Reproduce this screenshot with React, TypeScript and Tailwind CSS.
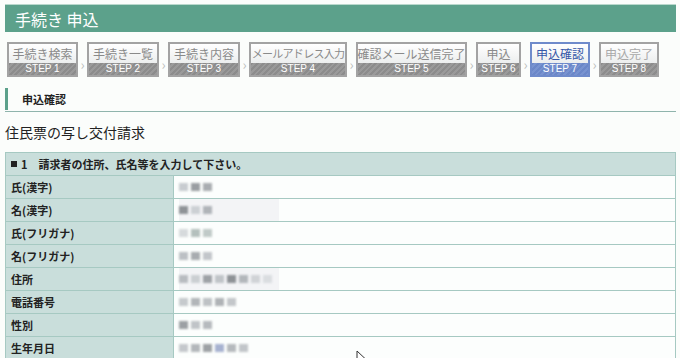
import React from "react";

const font = { fontFamily: '"Noto Sans CJK JP", "Noto Sans", sans-serif' };

const steps = [
  { label: "手続き検索", w: "w-[71px]" },
  { label: "手続き一覧", w: "w-[72px]" },
  { label: "手続き内容", w: "w-[72px]" },
  { label: "メールアドレス入力", w: "w-[98px]", tight: true },
  { label: "確認メール送信完了", w: "w-[111px]" },
  { label: "申込", w: "w-[45px]" },
  { label: "申込確認", w: "w-[60px]", active: true },
  { label: "申込完了", w: "w-[60px]", muted: true },
];

// blurred personal data
const rows = [
  { label: "氏(漢字)", blobs: ["#c8ccd0", "#9a9ea2", "#a9adb1"] },
  { label: "名(漢字)", blobs: ["#8f9397", "#ccd0d4", "#b0b4b8"], shade: true },
  { label: "氏(フリガナ)", blobs: ["#d6dadc", "#b4c0bd", "#c0cac8"] },
  { label: "名(フリガナ)", blobs: ["#bcc0c4", "#a8acb0", "#c2c6ca"] },
  { label: "住所", blobs: ["#b8bcc0", "#cbcfd2", "#9ea2a6", "#c0c4c8", "#8e9296", "#b3b7bb", "#d0d3d6", "#dadde0"], shade: true },
  { label: "電話番号", blobs: ["#c6cacd", "#b2b6b9", "#bec2c5", "#afb3b6", "#c3c7ca"] },
  { label: "性別", blobs: ["#9ca0a4", "#c0c4c8", "#b6babe"] },
  { label: "生年月日", blobs: ["#c4c8cc", "#b3b7bb", "#9da1a5", "#a7b2d0", "#b5b9bd", "#c1c5c9"] },
];

function Step({ label, w, active, tight, muted, n }: { label: string; w: string; active?: boolean; tight?: boolean; muted?: boolean; n: number }) {
  return (
    <div
      className={`${w} h-[35px] flex flex-col border-2 ${
        active ? "border-[#6f8bcb]" : "border-[#a3a3a3]"
      }`}
    >
      <div
        className={`h-[19px] flex items-center justify-center whitespace-nowrap leading-none bg-gradient-to-b from-white to-[#eceeee] ${
          tight ? "text-[11px] tracking-[-0.7px]" : "text-[12px]"
        } ${active ? "text-[#3557a8]" : muted ? "text-[#a8a8a8]" : "text-[#8a8a8a]"}`}
      >
        {label}
      </div>
      <div
        className={`flex-1 flex items-center justify-center text-[10px] leading-none text-white ${
          active
            ? "bg-[repeating-linear-gradient(135deg,#6b87c8_0px,#6b87c8_2px,#7893d0_2px,#7893d0_4px)]"
            : "bg-[repeating-linear-gradient(135deg,#8c8c8c_0px,#8c8c8c_2px,#9a9a9a_2px,#9a9a9a_4px)]"
        }`}
        style={{ fontFamily: '"Liberation Sans", sans-serif' }}
      >
        STEP {n}
      </div>
    </div>
  );
}

function Blur({ colors }: { colors: string[] }) {
  return (
    <div className="flex items-center blur-[1.2px]">
      {colors.map((c, i) => (
        <span
          key={i}
          className="inline-block w-[9px] h-[8px] mr-[3px]"
          style={{ backgroundColor: c }}
        />
      ))}
    </div>
  );
}

export default function App() {
  return (
    <div
      className="relative w-[680px] h-[358px] overflow-hidden bg-[#fbfdfb] pl-[5px] pr-[4px] pt-[4px]"
      style={font}
    >
      <div className="h-[28px] bg-[#5ca18b] border-t border-[#b9d8cc] flex items-center pl-[10px] text-white text-[16px]">
        手続き 申込
      </div>

      <div className="flex items-center pl-[2px] mt-[10px]">
        {steps.map((s, i) => (
          <React.Fragment key={s.label}>
            {i > 0 && (
              <div className="w-[9px] flex justify-center pt-[8px] text-[14px] text-[#bdbdbd] leading-none">
                ›
              </div>
            )}
            <Step label={s.label} w={s.w} active={s.active} tight={s.tight} muted={s.muted} n={i + 1} />
          </React.Fragment>
        ))}
      </div>

      <div className="mt-[11px] h-[24px] flex border-b border-[#8fb4ac]">
        <div className="w-[3px] h-[22px] bg-[#5ca18b]" />
        <div className="pl-[14px] flex items-center text-[11px] font-bold text-[#222]">申込確認</div>
      </div>

      <div className="mt-[11px] text-[14px] leading-[18px] text-[#222]">住民票の写し交付請求</div>

      <div className="mt-[11px] border border-[#a6c9c2]">
        <div className="h-[22px] bg-[#c9dedb] flex items-center pl-[5px] text-[11px] font-bold text-[#222]">
          <span className="inline-block w-[6px] h-[6px] bg-[#222] mr-[4px]" />
          1　請求者の住所、氏名等を入力して下さい。
        </div>
        {rows.map((r) => (
          <div key={r.label} className="h-[23px] flex border-t border-[#a6c9c2]">
            <div className="w-[168px] bg-[#c9dedb] border-r border-[#a6c9c2] flex items-center pl-[5px] text-[11px] font-bold text-[#222]">
              {r.label}
            </div>
            <div className="flex-1 bg-[#fcfefd] flex items-center pl-[5px]">
              <div className={`h-full flex items-center pr-[4px] ${r.shade ? "bg-[#f3f4f6] w-[100px]" : ""}`}>
                <Blur colors={r.blobs} />
              </div>
            </div>
          </div>
        ))}
      </div>

      <svg className="absolute left-[356px] top-[350px]" width="10" height="14" viewBox="0 0 10 14">
        <path d="M1 1 L1 12 L4 9 L6 13 L7.5 12.3 L5.6 8.5 L9 8.5 Z" fill="#fff" stroke="#333" strokeWidth="1" />
      </svg>
    </div>
  );
}
